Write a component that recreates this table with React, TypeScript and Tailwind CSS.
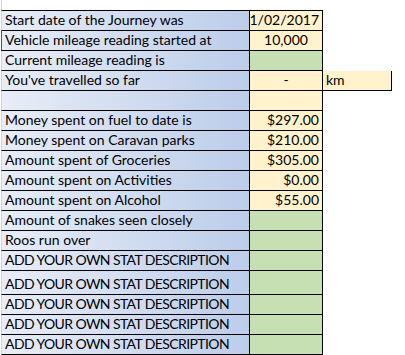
type Row = {
  label: string;
  value?: string;
  align?: 'left' | 'center' | 'right';
  fill: 'yellow' | 'green';
  km?: boolean;
  tall?: boolean;
  marker?: boolean;
};

const rows: Row[] = [
  { label: 'Start date of the Journey was', value: '1/02/2017', align: 'right', fill: 'yellow' },
  { label: 'Vehicle mileage reading started at', value: '10,000', align: 'center', fill: 'yellow', marker: true },
  { label: 'Current mileage reading is', fill: 'green' },
  { label: "You've travelled so far", value: '-', align: 'center', fill: 'yellow', km: true },
  { label: '', fill: 'yellow' },
  { label: 'Money spent on fuel to date is', value: '$297.00', align: 'right', fill: 'yellow' },
  { label: 'Money spent on Caravan parks', value: '$210.00', align: 'right', fill: 'yellow' },
  { label: 'Amount spent of Groceries', value: '$305.00', align: 'right', fill: 'yellow' },
  { label: 'Amount spent on Activities', value: '$0.00', align: 'right', fill: 'yellow' },
  { label: 'Amount spent on Alcohol', value: '$55.00', align: 'right', fill: 'yellow' },
  { label: 'Amount of snakes seen closely', fill: 'green' },
  { label: 'Roos run over', fill: 'green' },
  { label: 'ADD YOUR OWN STAT DESCRIPTION', fill: 'green' },
  { label: 'ADD YOUR OWN STAT DESCRIPTION', fill: 'green', tall: true },
  { label: 'ADD YOUR OWN STAT DESCRIPTION', fill: 'green' },
  { label: 'ADD YOUR OWN STAT DESCRIPTION', fill: 'green' },
  { label: 'ADD YOUR OWN STAT DESCRIPTION', fill: 'green' },
];

const alignClass = {
  left: 'justify-start pl-[2px]',
  center: 'justify-center',
  right: 'justify-end pr-[3px]',
};

export default function App() {
  return (
    <div className="w-[405px] h-[355px] overflow-hidden bg-white text-black text-[14px] leading-none" style={{ fontFamily: 'Lato, "Liberation Sans", sans-serif' }}>
      <div className="ml-px h-[10px] w-px bg-[#d4d4d4]" />
      {rows.map((row, i) => {
        const height = i === 0 ? 'h-[21px]' : row.tall ? 'h-[24px]' : 'h-[20px]';
        const top = i === 0 ? 'border-t' : '';
        const upper = row.label.startsWith('ADD') ? 'tracking-[-0.6px]' : '';
        return (
          <div key={i} className={`flex ${height}`}>
            <div
              className={`ml-px w-[249px] flex items-end pl-[3px] pb-[3px] whitespace-nowrap overflow-hidden border-b border-r border-black bg-gradient-to-r from-[#e8edf7] to-[#bccdea] ${top} ${upper}`}
              style={{ borderLeft: `1px solid ${row.marker ? '#217346' : '#d4d4d4'}` }}
            >
              {row.label}
            </div>
            <div
              className={`w-[73px] flex items-end pb-[3px] border-b border-r border-black ${row.fill === 'yellow' ? 'bg-[#fff2cc]' : 'bg-[#c6e0b4]'} ${alignClass[row.align ?? 'left']} ${top}`}
            >
              {row.value}
            </div>
            {row.km && (
              <div className="w-[69px] flex items-end pl-[3px] pb-[3px] border-b border-r border-black bg-[#fff2cc]">km</div>
            )}
          </div>
        );
      })}
      <div className="ml-px h-[10px] w-px bg-[#d4d4d4]" />
    </div>
  );
}
